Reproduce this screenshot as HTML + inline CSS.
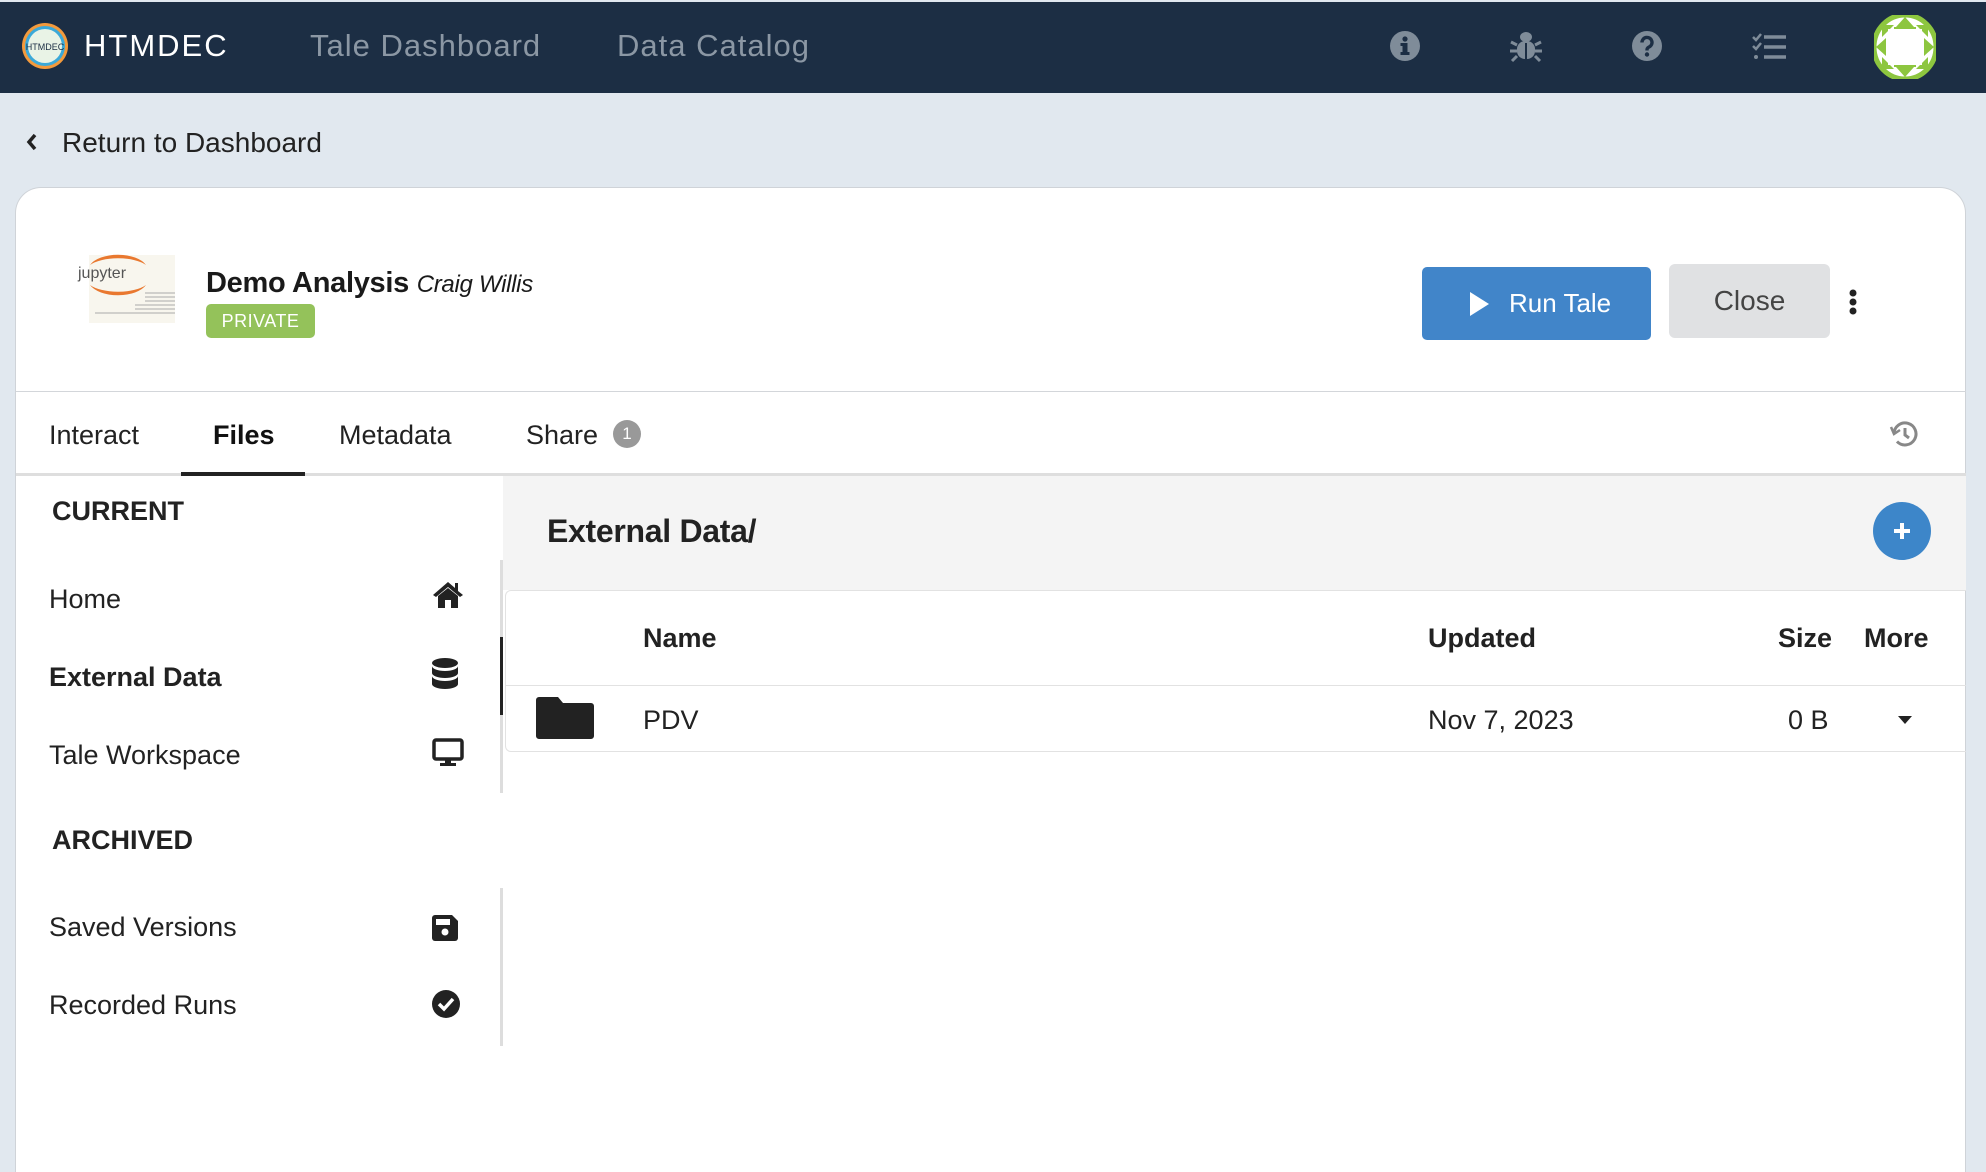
<!DOCTYPE html>
<html style="overflow:hidden;height:1172px"><head><meta charset="utf-8"><style>
*{box-sizing:border-box;margin:0;padding:0}
body{width:1986px;height:1172px;overflow:hidden;background:#e1e8ef;font-family:"Liberation Sans",sans-serif;color:#222;position:relative}
.a{position:absolute;white-space:nowrap}
.nav{position:absolute;left:0;top:2px;width:1986px;height:91px;background:#1c2e44}
.card{position:absolute;left:15px;top:187px;width:1951px;height:985px;background:#fff;border:1px solid #cfd3d8;border-bottom:none;border-radius:26px 26px 0 0}
.side{font-size:27px;color:#222}
</style></head><body>
<div class="nav"></div>
<svg class="a" style="left:21px;top:22px" width="48" height="48" viewBox="0 0 48 48"><circle cx="24" cy="24" r="23" fill="#f39a3c"/><circle cx="24" cy="24" r="20" fill="#3ba9d9"/><circle cx="24" cy="24" r="17" fill="#e9f3e6"/><text x="24" y="28" font-size="9" text-anchor="middle" fill="#1c2e44" font-family="Liberation Sans">HTMDEC</text></svg>
<div class="a" style="left:84px;top:28px;font-size:31px;color:#fff;letter-spacing:2px">HTMDEC</div>
<div class="a" style="left:310px;top:28px;font-size:31px;color:#8b97a4;letter-spacing:1px">Tale Dashboard</div>
<div class="a" style="left:617px;top:28px;font-size:31px;color:#8b97a4;letter-spacing:1px">Data Catalog</div>
<svg class="a" style="left:1390px;top:31px" width="30" height="30" viewBox="0 0 30 30"><circle cx="15" cy="15" r="15" fill="#7f8c99"/><rect x="12.5" y="12" width="5" height="11" fill="#1c2e44"/><rect x="10.5" y="12" width="6" height="3" fill="#1c2e44"/><rect x="10.5" y="21" width="9" height="3" fill="#1c2e44"/><circle cx="15" cy="8" r="2.6" fill="#1c2e44"/></svg>
<svg class="a" style="left:1510px;top:30px" width="32" height="34" viewBox="0 0 32 34" fill="#7f8c99"><ellipse cx="16" cy="7" rx="6" ry="5"/><rect x="7" y="11" width="18" height="18" rx="8"/><path d="M7 15 L1 12 M7 21 H0 M7 26 L2 31 M25 15 L31 12 M25 21 H32 M25 26 L30 31" stroke="#7f8c99" stroke-width="3"/><rect x="15" y="13" width="2" height="16" fill="#1c2e44"/></svg>
<svg class="a" style="left:1632px;top:31px" width="30" height="30" viewBox="0 0 30 30"><circle cx="15" cy="15" r="15" fill="#7f8c99"/><path d="M10 11.5 a5 5 0 1 1 7 4.5 c-2 1-2 2-2 3.5" stroke="#1c2e44" stroke-width="3.4" fill="none"/><circle cx="15" cy="23.5" r="2.2" fill="#1c2e44"/></svg>
<svg class="a" style="left:1752px;top:33px" width="34" height="28" viewBox="0 0 34 28" fill="none" stroke="#7f8c99" stroke-width="3.5"><path d="M1 4 l3 3 l5-6 M1 13 l3 3 l5-6" stroke-width="2.5"/><circle cx="4" cy="24" r="2" fill="#7f8c99" stroke="none"/><path d="M12 4 H34 M12 14 H34 M12 24 H34"/></svg>
<svg class="a" style="left:1874px;top:15px" width="62" height="64" viewBox="0 0 62 64"><ellipse cx="31" cy="32" rx="31" ry="32" fill="#fff"/><path d="M31 2 L40 12 L22 12 Z M31 62 L40 52 L22 52Z M2 32 L12 23 L12 41Z M60 32 L50 23 L50 41Z M8 10 L20 10 L8 22Z M54 10 L42 10 L54 22Z M8 54 L20 54 L8 42Z M54 54 L42 54 L54 42Z M20 12 H42 V16 H20Z M20 48 H42 V52 H20Z" fill="#8dc63f"/><rect x="14" y="14" width="34" height="36" fill="#fff"/><ellipse cx="31" cy="32" rx="31" ry="32" fill="none" stroke="#8dc63f" stroke-width="5"/></svg>
<svg class="a" style="left:26px;top:133px" width="12" height="18" viewBox="0 0 12 18"><path d="M9 2 L3 9 L9 16" stroke="#222" stroke-width="3.5" fill="none"/></svg>
<div class="a" style="left:62px;top:127px;font-size:28px;color:#222">Return to Dashboard</div>
<div class="card"></div>
<svg class="a" style="left:75px;top:245px" width="102" height="80" viewBox="0 0 102 80"><rect x="14" y="10" width="86" height="68" fill="#f8f6ee"/><path d="M15 20 a30 16 0 0 1 56 0 a32 13 0 0 0 -56 0Z M15 40 a30 16 0 0 0 56 0 a32 13 0 0 1 -56 0Z" fill="#e9782f"/><text x="3" y="33" font-size="16" fill="#555" font-family="Liberation Sans">jupyter</text><g stroke="#aaa" stroke-width="1"><path d="M70 48 H100 M70 52 H100 M70 56 H100 M60 60 H100 M60 64 H100 M20 68 H100"/></g></svg>
<div class="a" style="left:206px;top:267px;font-size:29px;color:#1a1a1a;font-weight:bold;letter-spacing:-0.3px">Demo Analysis <span style="font-size:24px;font-weight:normal;font-style:italic">Craig Willis</span></div>
<div class="a" style="left:206px;top:304px;width:109px;height:34px;background:#94c25a;border-radius:5px;color:#fff;font-size:18px;text-align:center;line-height:34px;letter-spacing:.5px">PRIVATE</div>
<div class="a" style="left:1422px;top:267px;width:229px;height:73px;background:#4185c9;border-radius:5px;color:#fff;font-size:26px;line-height:73px"><svg class="a" style="left:46px;top:24px" width="22" height="26" viewBox="0 0 22 26"><path d="M2 1 L21 13 L2 25Z" fill="#fff"/></svg><span class="a" style="left:87px;top:0">Run Tale</span></div>
<div class="a" style="left:1669px;top:264px;width:161px;height:74px;background:#e0e1e3;border-radius:6px;color:#444;font-size:28px;line-height:74px;text-align:center">Close</div>
<svg class="a" style="left:1848px;top:288px" width="10" height="28"><circle cx="5" cy="5" r="3.5" fill="#222"/><circle cx="5" cy="14" r="3.5" fill="#222"/><circle cx="5" cy="23" r="3.5" fill="#222"/></svg>
<div class="a" style="left:16px;top:391px;width:1950px;height:1px;background:#d3d6da"></div>
<div class="a" style="left:49px;top:420px;font-size:27px;color:#222">Interact</div>
<div class="a" style="left:213px;top:420px;font-size:27px;color:#111;font-weight:bold">Files</div>
<div class="a" style="left:339px;top:420px;font-size:27px;color:#222">Metadata</div>
<div class="a" style="left:526px;top:420px;font-size:27px;color:#222">Share</div>
<div class="a" style="left:613px;top:420px;width:28px;height:28px;border-radius:50%;background:#999;color:#fff;font-size:17px;text-align:center;line-height:28px">1</div>
<svg class="a" style="left:1889px;top:418px" width="32" height="32" viewBox="0 0 32 32" fill="none" stroke="#888" stroke-width="3"><path d="M5 16 a11 11 0 1 1 3 7.5"/><path d="M2 9 L5 16 L11 12" stroke-width="2.5"/><path d="M16 10 V17 L20 20"/></svg>
<div class="a" style="left:16px;top:473px;width:1950px;height:3px;background:#dedede"></div>
<div class="a" style="left:181px;top:472px;width:124px;height:4px;background:#222"></div>
<div class="a" style="left:503px;top:476px;width:1463px;height:114px;background:#f4f4f4"></div>
<div class="a" style="left:547px;top:513px;font-size:32px;color:#222;font-weight:bold;letter-spacing:-0.3px">External Data/</div>
<div class="a" style="left:1873px;top:502px;width:58px;height:58px;border-radius:50%;background:#3d86c9"><svg class="a" style="left:19px;top:19px" width="20" height="20"><path d="M10 2 V18 M2 10 H18" stroke="#fff" stroke-width="4"/></svg></div>
<div class="a" style="left:505px;top:590px;width:1461px;height:162px;border:1px solid #e2e2e2;border-right:none;border-radius:6px 0 0 6px"></div>
<div class="a" style="left:505px;top:685px;width:1461px;height:1px;background:#e2e2e2"></div>
<div class="a side" style="left:643px;top:623px;font-weight:bold">Name</div>
<div class="a side" style="left:1428px;top:623px;font-weight:bold">Updated</div>
<div class="a side" style="left:1778px;top:623px;font-weight:bold">Size</div>
<div class="a side" style="left:1864px;top:623px;font-weight:bold">More</div>
<svg class="a" style="left:536px;top:697px" width="58" height="42" viewBox="0 0 58 42"><path d="M3 0 H22 L27 6 H55 a3 3 0 0 1 3 3 V39 a3 3 0 0 1 -3 3 H3 a3 3 0 0 1 -3 -3 V3 a3 3 0 0 1 3 -3Z" fill="#222"/></svg>
<div class="a side" style="left:643px;top:705px">PDV</div>
<div class="a side" style="left:1428px;top:705px">Nov 7, 2023</div>
<div class="a side" style="left:1788px;top:705px">0 B</div>
<svg class="a" style="left:1898px;top:716px" width="14" height="9"><path d="M0 0 H14 L7 8Z" fill="#222"/></svg>
<div class="a side" style="left:52px;top:496px;font-weight:bold">CURRENT</div>
<div class="a side" style="left:49px;top:584px">Home</div>
<div class="a side" style="left:49px;top:662px;font-weight:bold">External Data</div>
<div class="a side" style="left:49px;top:740px">Tale Workspace</div>
<div class="a side" style="left:52px;top:825px;font-weight:bold">ARCHIVED</div>
<div class="a side" style="left:49px;top:912px">Saved Versions</div>
<div class="a side" style="left:49px;top:990px">Recorded Runs</div>
<div class="a" style="left:500px;top:560px;width:3px;height:233px;background:#ddd"></div>
<div class="a" style="left:500px;top:637px;width:3px;height:78px;background:#222"></div>
<div class="a" style="left:500px;top:888px;width:3px;height:158px;background:#ddd"></div>
<svg class="a" style="left:432px;top:580px" width="32" height="28" viewBox="0 0 32 28" fill="#222"><path d="M16 2 L1 15 L4 17 L16 7 L28 17 L31 15 L26 11 V3 H23 V8Z"/><path d="M6 16 L16 8 L26 16 V28 H19 V20 H13 V28 H6Z"/></svg>
<svg class="a" style="left:432px;top:658px" width="26" height="32" viewBox="0 0 26 32" fill="#222"><ellipse cx="13" cy="5" rx="13" ry="5"/><path d="M0 8 a13 5 0 0 0 26 0 V15 a13 5 0 0 1 -26 0Z M0 18 a13 5 0 0 0 26 0 V26 a13 5 0 0 1 -26 0Z"/></svg>
<svg class="a" style="left:432px;top:738px" width="32" height="30" viewBox="0 0 32 30"><rect x="2" y="2" width="28" height="19" rx="2" fill="none" stroke="#222" stroke-width="3.5"/><rect x="13" y="21" width="6" height="5" fill="#222"/><rect x="8" y="25" width="16" height="3" fill="#222"/></svg>
<svg class="a" style="left:432px;top:915px" width="26" height="26" viewBox="0 0 26 26"><path d="M3 0 H20 L26 6 V23 a3 3 0 0 1 -3 3 H3 a3 3 0 0 1 -3 -3 V3 a3 3 0 0 1 3 -3Z" fill="#222"/><rect x="4" y="4" width="14" height="6" fill="#fff"/><circle cx="13" cy="17" r="3.5" fill="#fff"/></svg>
<svg class="a" style="left:432px;top:990px" width="28" height="28" viewBox="0 0 28 28"><circle cx="14" cy="14" r="14" fill="#222"/><path d="M7 14 L12 19 L21 9" stroke="#fff" stroke-width="3.5" fill="none"/></svg>
</body></html>
